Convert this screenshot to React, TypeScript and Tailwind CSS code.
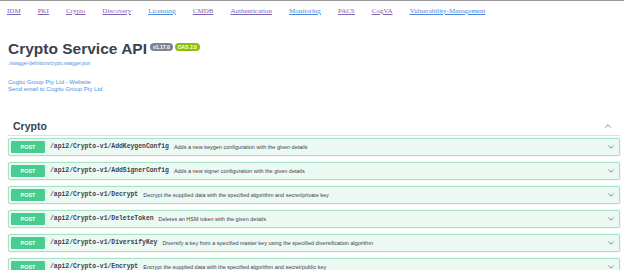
import { ChevronDown, ChevronUp } from "lucide-react";

const NAV_LINKS: { label: string; visited: boolean }[] = [
  { label: "IDM", visited: true },
  { label: "PKI", visited: true },
  { label: "Crypto", visited: true },
  { label: "Discovery", visited: true },
  { label: "Licensing", visited: false },
  { label: "CMDB", visited: true },
  { label: "Authentication", visited: true },
  { label: "Monitoring", visited: false },
  { label: "PACS", visited: true },
  { label: "CogVA", visited: true },
  { label: "Vulnerability-Management", visited: false },
];

const OPERATIONS = [
  { path: "/api2/Crypto-v1/AddKeygenConfig", summary: "Adds a new keygen configuration with the given details" },
  { path: "/api2/Crypto-v1/AddSignerConfig", summary: "Adds a new signer configuration with the given details" },
  { path: "/api2/Crypto-v1/Decrypt", summary: "Decrypt the supplied data with the specified algorithm and secret/private key" },
  { path: "/api2/Crypto-v1/DeleteToken", summary: "Deletes an HSM token with the given details" },
  { path: "/api2/Crypto-v1/DiversifyKey", summary: "Diversify a key from a specified master key using the specified diversification algorithm" },
  { path: "/api2/Crypto-v1/Encrypt", summary: "Encrypt the supplied data with the specified algorithm and secret/public key" },
];

export default function App() {
  return (
    <div className="h-[270px] w-[624px] overflow-hidden border-t border-[#9a9a9a] bg-white font-['Liberation_Sans',Arial,sans-serif] text-[#3b4151]">
      <nav className="flex h-[20px] items-center gap-[17px] pl-[7px] font-['Liberation_Serif','Times_New_Roman',serif] text-[7px] leading-[8px]">
        {NAV_LINKS.map((link) => (
          <a
            key={link.label}
            href="#"
            className={`underline ${link.visited ? "text-[#8063b3]" : "text-[#4a88e0]"}`}
          >
            {link.label}
          </a>
        ))}
      </nav>

      <div className="pl-[8px] pt-[19px]">
        <div className="flex items-start">
          <h1 className="text-[15.5px] font-bold leading-[18px] text-[#3b4151]">Crypto Service API</h1>
          <div className="ml-[3px] mt-[3px] flex gap-[2px]">
            <span className="rounded-full bg-[#7d8492] px-[3px] text-[5px] font-bold leading-[8px] text-white">v1.17.0</span>
            <span className="rounded-full bg-[#89bf04] px-[3px] text-[5px] font-bold leading-[8px] text-white">OAS 2.0</span>
          </div>
        </div>
        <a href="#" className="mt-[3px] block text-[4.5px] leading-[6px] text-[#4990e2]">
          ./swagger-definitions/crypto.swagger.json
        </a>
        <div className="mt-[12px] flex flex-col text-[6px] leading-[7px] text-[#4990e2]">
          <a href="#">Cogito Group Pty Ltd - Website</a>
          <a href="#">Send email to Cogito Group Pty Ltd</a>
        </div>
      </div>

      <div className="pl-[8px] pr-[4px] pt-[27px]">
        <div className="flex items-center justify-between border-b border-[#dedfe2] pb-[3px] pl-[5px] pr-[7px]">
          <h3 className="text-[10.5px] font-bold leading-[12px]">Crypto</h3>
          <ChevronUp size={10} strokeWidth={1.6} className="text-[#555]" />
        </div>

        <div className="mt-[2px] flex flex-col gap-[6px]">
          {OPERATIONS.map((op) => (
            <div
              key={op.path}
              className="flex h-[18px] items-center rounded-[2px] border border-[#a5e3c6] bg-[#ecf9f3] pl-[2px] pr-[3px] shadow-[0_0_2px_rgba(0,0,0,0.12)]"
            >
              <span className="flex h-[12px] w-[34px] items-center justify-center rounded-[1px] bg-[#49cc90] text-[5.5px] font-bold text-white">
                POST
              </span>
              <span className="ml-[5px] font-['Liberation_Mono','Courier_New',monospace] text-[6.4px] font-bold text-[#3b4151]">
                {op.path}
              </span>
              <span className="ml-[5px] text-[5.5px] text-[#3b4151]">{op.summary}</span>
              <ChevronDown size={10} strokeWidth={1.6} className="ml-auto text-[#555]" />
            </div>
          ))}
        </div>
      </div>
    </div>
  );
}
